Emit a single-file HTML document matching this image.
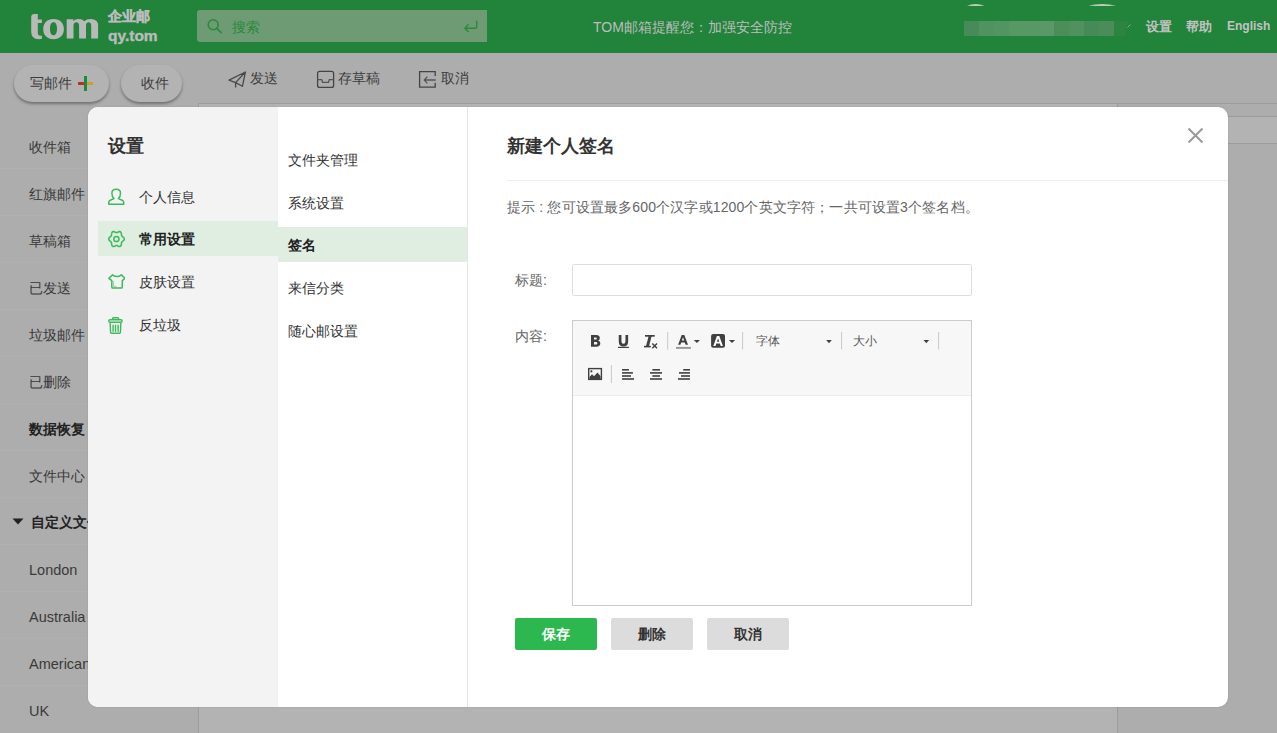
<!DOCTYPE html>
<html><head><meta charset="utf-8">
<style>
*{box-sizing:border-box;margin:0;padding:0}
html,body{width:1277px;height:733px;overflow:hidden}
body{position:relative;background:#adadad;font-family:"Liberation Sans",sans-serif;font-size:14px;color:#3a3a3a}
.abs{position:absolute;white-space:nowrap}
#hdr{position:absolute;left:0;top:0;width:1277px;height:53px;background:#22833b}
#hdr .logo{left:30px;top:2px;font-size:44px;font-weight:bold;color:#b3b3b3;letter-spacing:-1px}
#search{left:197px;top:10px;width:290px;height:32px;background:#6e9b73;border-radius:3px 0 0 3px}
.side{left:29px;font-size:14px;color:#383838}
#modal{position:absolute;left:88px;top:107px;width:1140px;height:600px;background:#fff;border-radius:10px;overflow:hidden;box-shadow:0 0 2px rgba(0,0,0,0.12)}
#lp{position:absolute;left:0;top:0;width:190px;height:600px;background:#f3f3f3}
#mp{position:absolute;left:190px;top:0;width:190px;height:600px;background:#fff;border-right:1px solid #e6e6e6}
.mi{font-size:14px;color:#333}
.btn{position:absolute;top:511px;width:82px;height:32px;border-radius:2px;font-size:14px;font-weight:bold;text-align:center;line-height:32px}
</style></head><body>
<div id="hdr">
  <svg class="abs" style="left:0;top:0" width="104" height="53" viewBox="0 0 104 53"><g fill="#b9b9b9">
    <path d="M31.2 17.2 Q31.2 14 34.4 14 H37.8 V19.6 H41.9 V23 H37.8 V32.6 Q37.8 35.8 40.6 35.8 H41.9 V38.8 Q40.6 39.2 38.6 39.2 Q31.2 39.2 31.2 31.8 Z"/>
    <path fill-rule="evenodd" d="M53.55 19 C59.9 19 63.9 23 63.9 29.1 C63.9 35.2 59.9 39.2 53.55 39.2 C47.2 39.2 43.2 35.2 43.2 29.1 C43.2 23 47.2 19 53.55 19 Z M53.5 22.2 C51.2 22.2 50 24.8 50 28.7 C50 32.6 51.2 35.2 53.5 35.2 C55.8 35.2 57 32.6 57 28.7 C57 24.8 55.8 22.2 53.5 22.2 Z"/>
    <path d="M66.7 38.6 V19.2 H73.3 V21 Q75.2 19 78.6 19 Q82.6 19 84.3 21.3 Q86.6 19 90.6 19 Q98.1 19 98.1 25.6 V38.6 H91.2 V25.8 Q91.2 22.3 88.6 22.3 Q86 22.3 86 25.8 V38.6 H79.1 V25.8 Q79.1 22.3 76.4 22.3 Q73.5 22.3 73.5 25.8 V38.6 Z"/>
  </g></svg>
  <div class="abs" style="left:108px;top:8px;font-size:13.5px;font-weight:bold;color:#bbb;-webkit-text-stroke:0.5px #bbb">企业邮</div>
  <div class="abs" style="left:108px;top:27px;font-size:15.5px;font-weight:bold;color:#bbb;-webkit-text-stroke:0.4px #bbb">qy.tom</div>
  <div class="abs" id="search"></div>
  <svg class="abs" style="left:205px;top:17px" width="18" height="18" viewBox="205 17 18 18"><circle cx="213.2" cy="24.8" r="5" fill="none" stroke="#2a8a3e" stroke-width="1.5"/><path d="M216.8 28.4 L221.2 32.6" stroke="#2a8a3e" stroke-width="1.7" stroke-linecap="round"/></svg>
  <svg class="abs" style="left:462px;top:19px" width="18" height="15" viewBox="462 19 18 15"><path d="M476.8 21.2 V26 Q476.8 28.2 474.6 28.2 H465 M468.2 24.8 L464.8 28.2 L468.2 31.6" fill="none" stroke="#2a8a3e" stroke-width="1.4" stroke-linecap="round" stroke-linejoin="round"/></svg>
  <div class="abs" style="left:964px;top:21px;width:150px;height:15px;display:flex">
    <div style="width:15px;background:#488a59"></div><div style="width:15px;background:#509360"></div><div style="width:15px;background:#539562"></div><div style="width:15px;background:#579865"></div><div style="width:15px;background:#579865"></div><div style="width:15px;background:#5b9869"></div><div style="width:15px;background:#4c8e58"></div><div style="width:15px;background:#50915f"></div><div style="width:15px;background:#468a59"></div><div style="width:15px;background:#4b8c58"></div>
  </div>
  <div class="abs" style="left:1114px;top:21px;width:14px;height:15px;background:#2b8540;clip-path:polygon(0 0,100% 0,80% 100%,0 100%)"></div>
  <svg class="abs" style="left:1126px;top:23px" width="6" height="6" viewBox="0 0 6 6"><path d="M1.5 4.5 L4.5 1.5" stroke="#7fb08a" stroke-width="1"/></svg>
  <svg class="abs" style="left:960px;top:0" width="160" height="10" viewBox="960 0 160 10"><path d="M967 5.6 Q975.7 2.4 984.4 5.6 Q975.7 6.6 967 5.6Z M1088.4 5.6 Q1102.2 2.4 1116 5.6 Q1102.2 6.6 1088.4 5.6Z" fill="#b5d0b9"/></svg>

  <div class="abs" style="left:232px;top:19px;font-size:14px;color:#2a8a3e">搜索</div>
  <div class="abs" style="left:593px;top:19px;font-size:14px;color:#bdbdbd">TOM邮箱提醒您：加强安全防控</div>
  <div class="abs" style="left:1146px;top:19px;font-size:12.5px;font-weight:bold;color:#c2c2c2">设置</div>
  <div class="abs" style="left:1186px;top:19px;font-size:12.5px;font-weight:bold;color:#c2c2c2">帮助</div>
  <div class="abs" style="left:1227px;top:19px;font-size:12px;font-weight:bold;color:#c2c2c2">English</div>
</div>


<div class="abs" style="left:199px;top:104px;width:918px;height:629px;background:#b3b3b3"></div><div class="abs" style="left:198px;top:103px;width:1079px;height:1px;background:#9c9c9c"></div>
<div class="abs" style="left:198px;top:103px;width:1px;height:630px;background:#9c9c9c"></div>
<div class="abs" style="left:1117px;top:103px;width:1px;height:630px;background:#9c9c9c"></div>
<div class="abs" style="left:1118px;top:116px;width:159px;height:28px;background:#b3b3b3;border-top:1px solid #9c9c9c;border-bottom:1px solid #9c9c9c"></div>
<div class="abs" style="left:14px;top:65px;width:95px;height:37px;border-radius:19px;background:#b3b3b3;box-shadow:0 2px 3px rgba(0,0,0,0.35)"></div>
<div class="abs" style="left:30px;top:75px;font-size:14px;color:#3c3c3c">写邮件</div>
<div class="abs" style="left:78px;top:82px;width:6px;height:3px;background:#b8302a"></div>
<div class="abs" style="left:87px;top:82px;width:6px;height:3px;background:#c9a035"></div>
<div class="abs" style="left:84px;top:76px;width:3px;height:15px;background:#1f8a3e"></div>
<div class="abs" style="left:121px;top:65px;width:61px;height:37px;border-radius:19px;background:#b3b3b3;box-shadow:0 2px 3px rgba(0,0,0,0.35)"></div>
<div class="abs" style="left:141px;top:75px;font-size:14px;color:#3c3c3c">收件</div>
<svg class="abs" style="left:224px;top:66px" width="26" height="26" viewBox="224 66 26 26"><path d="M229 80.2 L245.4 72 L242.4 86.3 L235.6 82.6 Z M235.6 82.6 L245.4 72 M235.6 82.6 V87.6" fill="none" stroke="#4a4a4a" stroke-width="1.3" stroke-linejoin="round"/></svg>
<div class="abs" style="left:250px;top:70px;font-size:14px;color:#3c3c3c">发送</div>
<svg class="abs" style="left:314px;top:66px" width="24" height="26" viewBox="314 66 24 26"><rect x="317.6" y="71.4" width="16" height="16" rx="2" fill="none" stroke="#444" stroke-width="1.3"/><path d="M317.6 79.6 H321.7 L322.5 82.3 H328.5 L329.3 79.6 H333.6" fill="none" stroke="#555" stroke-width="1.3"/></svg>
<div class="abs" style="left:338px;top:70px;font-size:14px;color:#3c3c3c">存草稿</div>
<svg class="abs" style="left:414px;top:66px" width="26" height="26" viewBox="414 66 26 26"><path d="M435.2 75.9 V71.6 H419.6 V87.1 H435.2 V82.7" fill="none" stroke="#444" stroke-width="1.3"/><path d="M435.8 80 H424.6 M427.3 76.6 L424.3 80 L427.3 83.4" fill="none" stroke="#555" stroke-width="1.3"/></svg>
<div class="abs" style="left:441px;top:70px;font-size:14px;color:#3c3c3c">取消</div>
<div class="abs" style="left:0;top:168px;width:198px;height:1px;background:#b0b0b0"></div><div class="abs" style="left:0;top:215px;width:198px;height:1px;background:#b0b0b0"></div><div class="abs" style="left:0;top:262px;width:198px;height:1px;background:#b0b0b0"></div><div class="abs" style="left:0;top:309px;width:198px;height:1px;background:#b0b0b0"></div><div class="abs" style="left:0;top:356px;width:198px;height:1px;background:#b0b0b0"></div><div class="abs" style="left:0;top:403px;width:198px;height:1px;background:#b0b0b0"></div><div class="abs" style="left:0;top:450px;width:198px;height:1px;background:#b0b0b0"></div><div class="abs" style="left:0;top:497px;width:198px;height:1px;background:#b0b0b0"></div><div class="abs" style="left:0;top:544px;width:198px;height:1px;background:#b0b0b0"></div><div class="abs" style="left:0;top:591px;width:198px;height:1px;background:#b0b0b0"></div><div class="abs" style="left:0;top:638px;width:198px;height:1px;background:#b0b0b0"></div><div class="abs" style="left:0;top:685px;width:198px;height:1px;background:#b0b0b0"></div>
<svg class="abs" style="left:12px;top:518px" width="12" height="7" viewBox="0 0 12 7"><path d="M0.5 0.5 H11.5 L6 6.5 Z" fill="#222"/></svg>
<div class="abs side" style="top:139px">收件箱</div>
<div class="abs side" style="top:186px">红旗邮件</div>
<div class="abs side" style="top:233px">草稿箱</div>
<div class="abs side" style="top:280px">已发送</div>
<div class="abs side" style="top:327px">垃圾邮件</div>
<div class="abs side" style="top:374px">已删除</div>
<div class="abs side" style="top:421px;font-weight:bold;color:#222">数据恢复</div>
<div class="abs side" style="top:468px">文件中心</div>
<div class="abs side" style="left:31px;top:514px;font-weight:bold;color:#222">自定义文件夹</div>
<div class="abs side" style="top:562px;font-size:14.5px;color:#3a3a3a">London</div>
<div class="abs side" style="top:609px;font-size:14.5px;color:#3a3a3a">Australia</div>
<div class="abs side" style="top:656px;font-size:14.5px;color:#3a3a3a">American</div>
<div class="abs side" style="top:703px;font-size:14.5px;color:#3a3a3a">UK</div>

<div id="modal">
  <div id="lp">
    <div class="abs" style="left:20px;top:27px;font-size:18px;font-weight:bold;color:#333">设置</div>
    <div class="abs" style="left:10px;top:114px;width:180px;height:35px;background:#e0eee2"></div>
    
    <svg class="abs" style="left:19px;top:81px" width="18" height="18" viewBox="107 188 18 18"><path d="M114 198.6 C112.6 197.2 111.9 195.2 111.9 193.2 C111.9 190.6 113.6 189.3 116.2 189.3 C118.8 189.3 120.5 190.6 120.5 193.2 C120.5 195.2 119.8 197.2 118.4 198.6 L122.2 200.2 C123.2 200.7 123.7 201.4 123.7 202.4 V204.2 H108.7 V202.4 C108.7 201.4 109.2 200.7 110.2 200.2 Z" fill="none" stroke="#3cbb5b" stroke-width="1.5" stroke-linejoin="round"/></svg>
    <svg class="abs" style="left:19px;top:123px" width="18" height="18" viewBox="107 230 18 18"><g transform="translate(108.1 231) scale(1 1.07)"><path d="M16.20 7.50 L16.05 8.17 L15.64 8.78 L15.06 9.29 L14.46 9.71 L13.95 10.09 L13.60 10.50 L13.41 11.01 L13.34 11.65 L13.28 12.38 L13.12 13.13 L12.80 13.79 L12.30 14.25 L11.65 14.46 L10.91 14.41 L10.19 14.16 L9.52 13.85 L8.93 13.60 L8.40 13.50 L7.87 13.60 L7.28 13.85 L6.61 14.16 L5.89 14.41 L5.15 14.46 L4.50 14.25 L4.00 13.79 L3.68 13.13 L3.52 12.38 L3.46 11.65 L3.39 11.01 L3.20 10.50 L2.85 10.09 L2.34 9.71 L1.74 9.29 L1.16 8.78 L0.75 8.17 L0.60 7.50 L0.75 6.83 L1.16 6.22 L1.74 5.71 L2.34 5.29 L2.85 4.91 L3.20 4.50 L3.39 3.99 L3.46 3.35 L3.52 2.62 L3.68 1.87 L4.00 1.21 L4.50 0.75 L5.15 0.54 L5.89 0.59 L6.61 0.84 L7.28 1.15 L7.87 1.40 L8.40 1.50 L8.93 1.40 L9.52 1.15 L10.19 0.84 L10.91 0.59 L11.65 0.54 L12.30 0.75 L12.80 1.21 L13.12 1.87 L13.28 2.62 L13.34 3.35 L13.41 3.99 L13.60 4.50 L13.95 4.91 L14.46 5.29 L15.06 5.71 L15.64 6.22 L16.05 6.83 L16.20 7.50Z" fill="none" stroke="#3cbb5b" stroke-width="1.5"/></g><circle cx="116.4" cy="239" r="2.6" fill="none" stroke="#3cbb5b" stroke-width="1.5"/></svg>
    <svg class="abs" style="left:19px;top:166px" width="18" height="18" viewBox="107 273 18 18"><path d="M112.6 274.9 L108.9 278.3 L111.8 280.6 V287 Q111.8 288.1 112.9 288.1 H121.2 Q122.3 288.1 122.3 287 V280.6 L125 278.3 L121.4 274.9 C120 276.1 118.6 276.6 117 276.6 C115.4 276.6 114 276.1 112.6 274.9 Z" fill="none" stroke="#3cbb5b" stroke-width="1.5" stroke-linejoin="round"/><path d="M113.6 281 V286.4 H116.4" fill="none" stroke="#8fd6a0" stroke-width="1"/></svg>
    <svg class="abs" style="left:19px;top:209px" width="18" height="18" viewBox="107 316 18 18"><path d="M108.8 320.9 V321.3 C108.8 321.9 109.3 322.3 110 322.3 H121 C121.6 322.3 122.1 321.9 122.1 321.3 V320.9 C122.1 320.3 121.6 319.8 121 319.8 H110 C109.3 319.8 108.8 320.3 108.8 320.9 Z M112.6 319.6 V318.6 Q112.6 317.7 113.4 317.7 H117.8 Q118.6 317.7 118.6 318.6 V319.6 M110.1 322.4 L110.6 332.6 C110.6 333.1 111 333.3 111.5 333.3 H119.5 C120 333.3 120.4 333.1 120.4 332.6 L120.9 322.4" fill="none" stroke="#3cbb5b" stroke-width="1.4" stroke-linejoin="round"/><path d="M113.1 325.3 V331.2 M115.5 325.3 V331.2 M118.1 325.3 V331.2" stroke="#3cbb5b" stroke-width="1.4" stroke-linecap="round"/></svg>
<div class="abs mi" style="left:51px;top:82px">个人信息</div>
    <div class="abs mi" style="left:51px;top:124px;font-weight:bold;color:#222">常用设置</div>
    <div class="abs mi" style="left:51px;top:167px">皮肤设置</div>
    <div class="abs mi" style="left:51px;top:210px">反垃圾</div>
  </div>
  <div id="mp">
    <div class="abs" style="left:0;top:120px;width:189px;height:35px;background:#e0eee2"></div>
    <div class="abs mi" style="left:10px;top:45px">文件夹管理</div>
    <div class="abs mi" style="left:10px;top:88px">系统设置</div>
    <div class="abs mi" style="left:10px;top:130px;font-weight:bold;color:#222">签名</div>
    <div class="abs mi" style="left:10px;top:173px">来信分类</div>
    <div class="abs mi" style="left:10px;top:216px">随心邮设置</div>
  </div>
  <div class="abs" style="left:419px;top:27px;font-size:17.5px;font-weight:bold;color:#333">新建个人签名</div>
  <div class="abs" style="left:419px;top:73px;width:721px;height:1px;background:#eee"></div>
  <div class="abs" style="left:419px;top:92px;font-size:14px;color:#666;letter-spacing:0.15px">提示 : 您可设置最多600个汉字或1200个英文字符；一共可设置3个签名档。</div>
  <div class="abs" style="left:427px;top:165px;font-size:14px;color:#666">标题:</div>
  <div class="abs" style="left:484px;top:157px;width:400px;height:32px;border:1px solid #ddd;border-radius:2px"></div>
  <div class="abs" style="left:427px;top:221px;font-size:14px;color:#666">内容:</div>
  <div class="abs" style="left:484px;top:213px;width:400px;height:286px;border:1px solid #ccc">
    <div class="abs" style="left:0;top:0;width:398px;height:75px;background:#f7f7f7;border-bottom:1px solid #ececec"></div>
  </div>

  <svg class="abs" style="left:1099px;top:20px" width="18" height="18" viewBox="1187 127 18 18"><path d="M1188.5 128.5 L1202.5 142.5 M1202.5 128.5 L1188.5 142.5" stroke="#999" stroke-width="2"/></svg>
  <svg class="abs" style="left:485px;top:214px" width="398" height="74" viewBox="573 321 398 74">
    <path fill="#404040" fill-rule="evenodd" d="M591 335 H596.2 C598.6 335 599.8 336.3 599.8 338 C599.8 339.3 599.1 340.2 598 340.6 C599.5 341 600.3 342.1 600.3 343.6 C600.3 345.6 598.9 346.8 596.4 346.8 H591 Z M594 337.4 V339.6 H595.6 C596.4 339.6 596.8 339.2 596.8 338.5 C596.8 337.8 596.4 337.4 595.6 337.4 Z M594 341.9 V344.4 H595.9 C596.8 344.4 597.3 343.9 597.3 343.15 C597.3 342.4 596.8 341.9 595.9 341.9 Z"/>
    <path d="M620.1 335 V341.3 C620.1 344 621.3 345.2 623.45 345.2 C625.6 345.2 626.8 344 626.8 341.3 V335" fill="none" stroke="#404040" stroke-width="2.7"/>
    <rect x="618" y="346.8" width="10.9" height="1.2" fill="#404040"/>
    <rect x="645" y="335" width="9.7" height="1.7" fill="#404040"/>
    <path d="M648.8 335.5 H651.8 L648.9 346.5 H645.9 Z" fill="#404040"/>
    <rect x="644" y="345.8" width="6.8" height="1.6" fill="#404040"/>
    <path d="M652.3 343.4 L657 348.3 M657 343.4 L652.3 348.3" stroke="#404040" stroke-width="1.4"/>
    <rect x="667.2" y="332" width="1" height="17.7" fill="#c8c8c8"/>
    <path d="M678.1 344.8 L681.7 335 H684.3 L688 344.8 H685.6 L684.8 342.4 H681.2 L680.4 344.8 Z M681.8 340.6 H684.2 L683 337.2 Z" fill="#404040" fill-rule="evenodd"/>
    <rect x="676" y="346.9" width="14.9" height="2" fill="#999"/>
    <path d="M693.8 339.9 H700 L696.9 342.9 Z" fill="#404040"/>
    <rect x="711.1" y="334" width="13.9" height="13.8" rx="2" fill="#404040"/>
    <path d="M713.3 346 L716.9 336 H719.3 L722.9 346 H720.7 L719.9 343.6 H716.3 L715.5 346 Z M716.9 341.8 H719.3 L718.1 338.4 Z" fill="#fff" fill-rule="evenodd"/>
    <path d="M728.9 339.9 H735.1 L732 342.9 Z" fill="#404040"/>
    <rect x="742.1" y="332" width="1" height="17.4" fill="#c8c8c8"/>
    <path d="M826.2 340 H831.8 L829 343.2 Z" fill="#404040"/>
    <rect x="841.1" y="332" width="1" height="17.4" fill="#c8c8c8"/>
    <path d="M923.5 340 H929.1 L926.3 343.2 Z" fill="#404040"/>
    <rect x="938.1" y="332" width="1" height="17.4" fill="#c8c8c8"/>
    <rect x="588.7" y="368.6" width="12.7" height="10.8" fill="none" stroke="#404040" stroke-width="1.4"/>
    <circle cx="591.4" cy="371.3" r="1.1" fill="#404040"/>
    <path d="M589.5 379 V377 L592 374.3 L594 376.3 L597.5 372.5 L600.6 376.3 V379 Z" fill="#404040"/>
    <rect x="610.9" y="365" width="1" height="18" fill="#c8c8c8"/>
    <g fill="#404040">
      <rect x="622" y="369" width="6.9" height="1.6"/><rect x="622" y="372.1" width="10.9" height="1.6"/><rect x="622" y="375.2" width="9" height="1.6"/><rect x="622" y="378.2" width="12" height="1.6"/>
      <rect x="652.4" y="369" width="7.6" height="1.6"/><rect x="650" y="372.1" width="12" height="1.6"/><rect x="652.4" y="375.2" width="7.6" height="1.6"/><rect x="650" y="378.2" width="12" height="1.6"/>
      <rect x="683.2" y="369" width="6.8" height="1.6"/><rect x="679" y="372.1" width="11" height="1.6"/><rect x="681" y="375.2" width="9" height="1.6"/><rect x="678" y="378.2" width="12" height="1.6"/>
    </g>
  </svg>
  <div class="abs" style="left:668px;top:226px;font-size:12px;color:#555">字体</div>
  <div class="abs" style="left:765px;top:226px;font-size:12px;color:#555">大小</div>
  <div class="btn" style="left:427px;background:#2db84f;color:#fff">保存</div>
  <div class="btn" style="left:523px;background:#dcdcdc;color:#333">删除</div>
  <div class="btn" style="left:619px;background:#dcdcdc;color:#333">取消</div>
</div>
</body></html>
